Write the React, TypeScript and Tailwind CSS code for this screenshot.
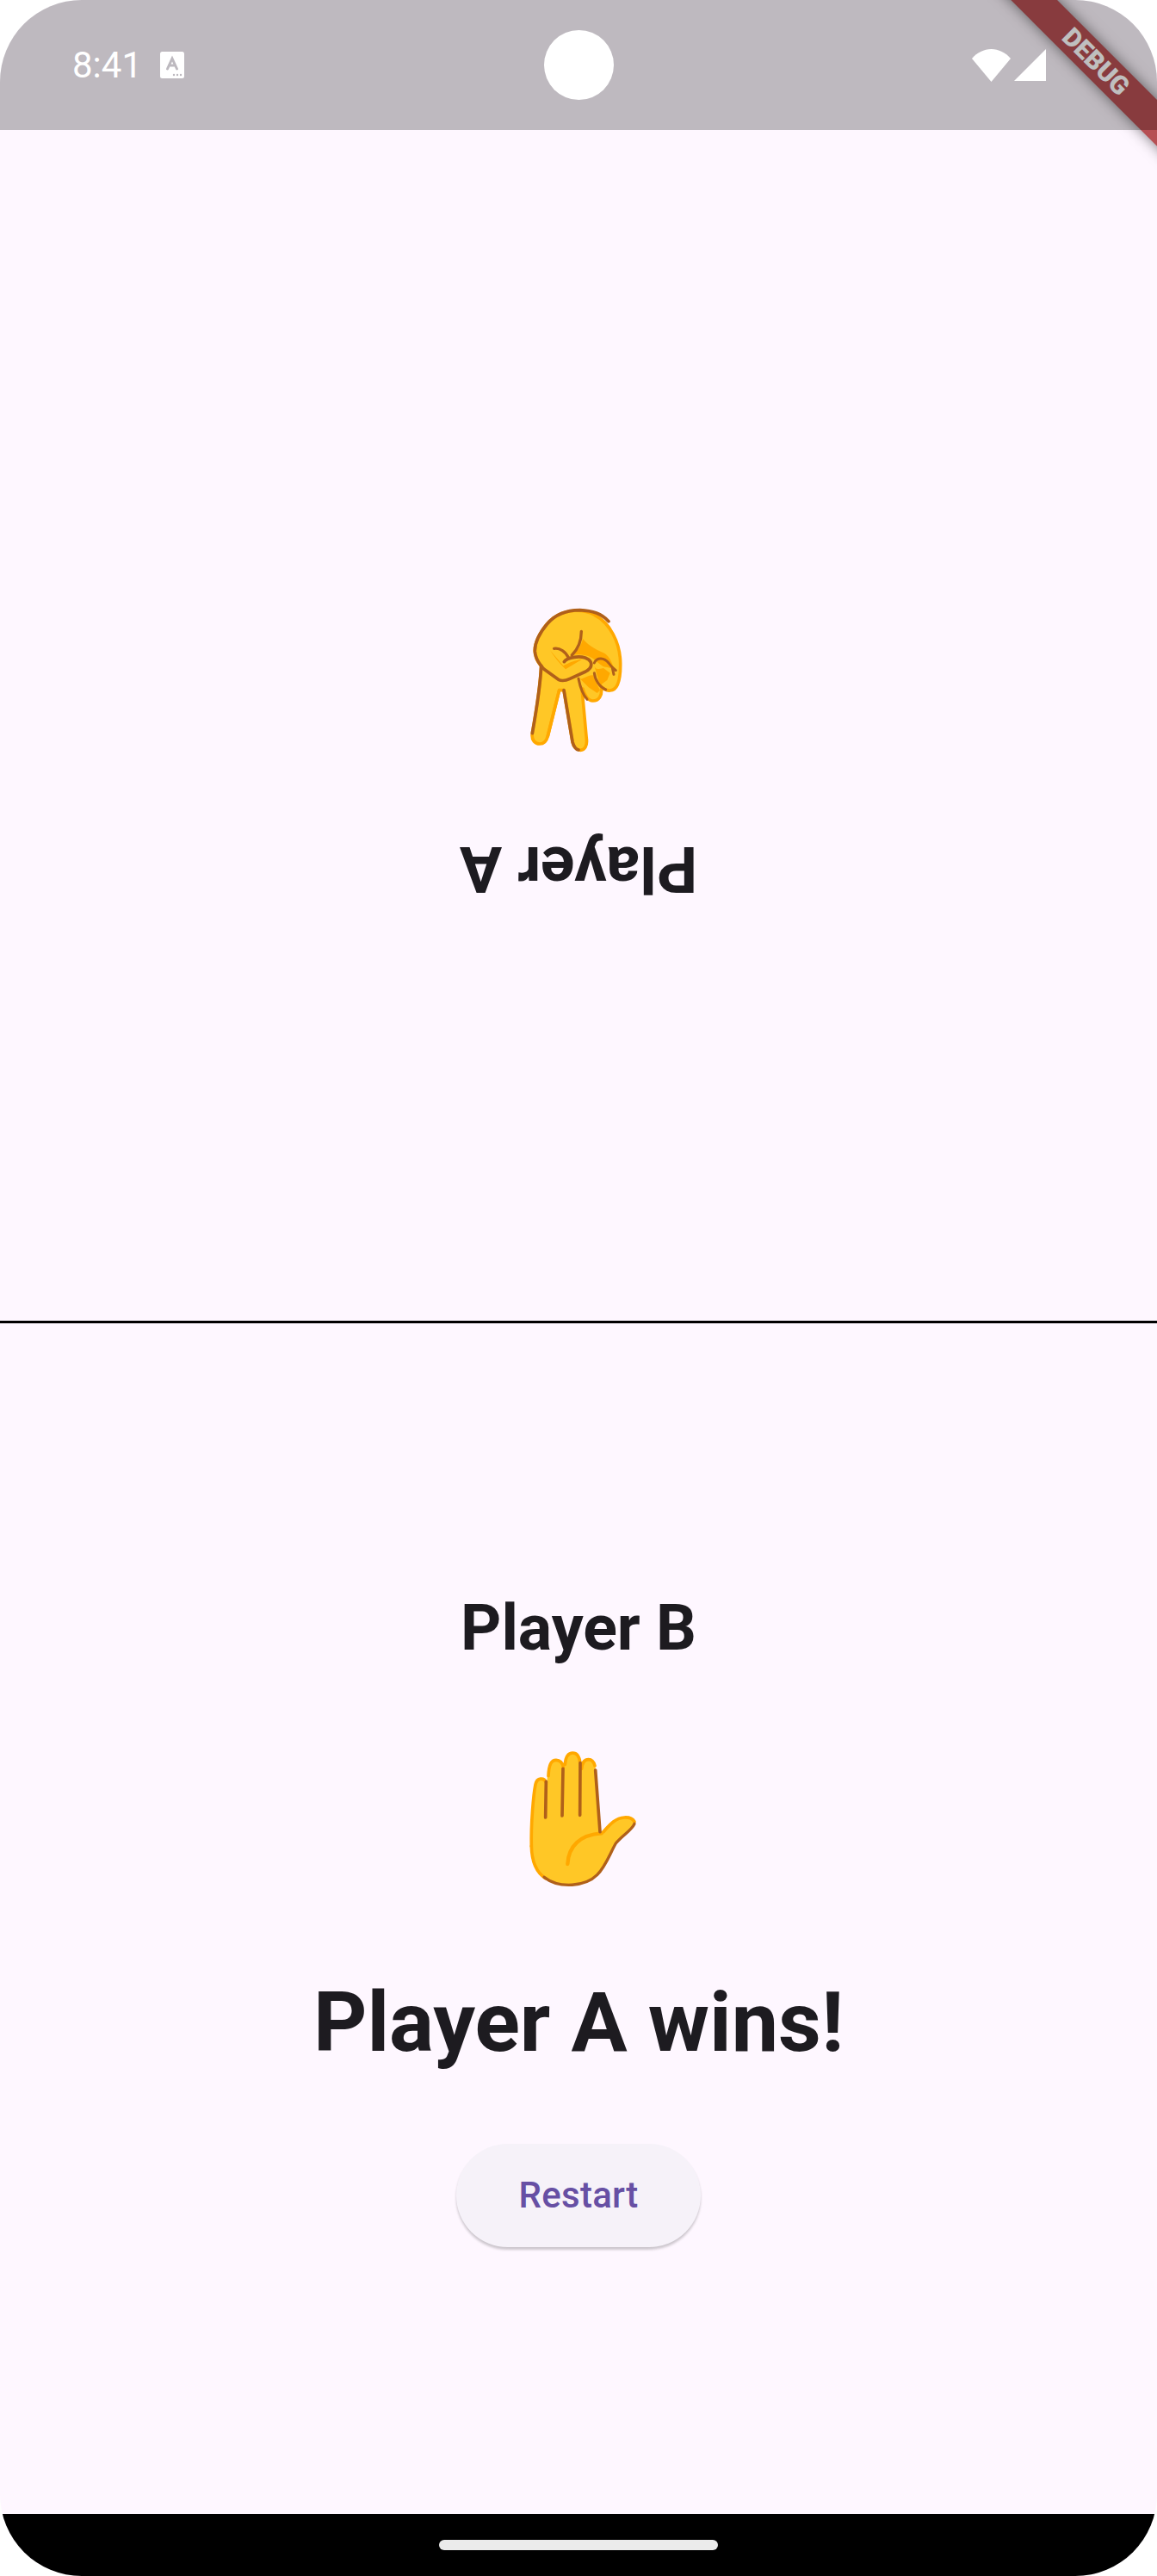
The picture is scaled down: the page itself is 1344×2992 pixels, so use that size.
const roboto = "font-['Roboto',sans-serif]";

function VictoryHand() {
  return (
    <svg viewBox="0 0 570 570" className="w-[190px] h-[190px]" fill="none" strokeLinecap="round" strokeLinejoin="round">
      <g transform="rotate(180 285 285)">
        <path d="M155 250C152 320 132 440 124 485C120 510 135 522 150 522C165 522 174 510 178 495L218 335L234 335L264 515C268 535 280 544 292 544C306 543 316 530 313 505L298 340L300 330C305 350 318 372 335 372C355 372 368 355 365 325L360 318C372 332 385 337 395 336C420 335 432 300 431 240C430 170 395 100 340 72C300 50 240 52 195 85C160 112 130 170 133 200C135 222 145 240 155 250Z" fill="#ffc726" stroke="#ffa800" strokeWidth="11" />
        <path d="M300 155C295 180 280 200 262 213C290 208 320 212 340 228C360 245 370 255 385 255L410 262C400 235 392 215 372 205C340 190 315 175 300 155Z" fill="#ffa800" />
        <path d="M340 250C345 265 352 262 372 258L395 275L385 300L360 318Z" fill="#ffa800" />
        <path d="M290 295C295 300 320 280 335 283L350 315L360 335L350 345L320 325Z" fill="#ffa800" />
        <path d="M186 196L232 250C250 240 270 232 300 226L240 262C225 248 205 225 186 196Z" fill="#ffa800" />
        <path d="M155 250C152 320 132 440 124 485" stroke="#b0601a" strokeWidth="11" />
        <path d="M218 335L178 495" stroke="#ffa800" strokeWidth="11" />
        <path d="M234 335L264 515C268 530 274 540 285 543" stroke="#b0601a" strokeWidth="11" />
        <path d="M390 95C365 68 335 58 290 56C240 56 200 75 175 105C150 135 132 170 133 200C135 232 155 250 165 262L215 298C225 303 240 302 255 295L310 270C325 262 332 250 328 238C322 225 300 215 270 220C255 222 240 228 235 236" stroke="#b0601a" strokeWidth="11" />
        <path d="M200 190C220 187 240 200 250 222M295 130C295 165 285 190 262 213" stroke="#b0601a" strokeWidth="10" />
        <path d="M340 275C342 300 360 325 380 333M340 240C350 218 375 222 390 240C400 255 410 262 415 266M403 258L408 280" stroke="#b0601a" strokeWidth="9" />
        <path d="M285 295C290 320 300 350 315 367" stroke="#b0601a" strokeWidth="9" />
      </g>
    </svg>
  );
}

function RaisedHand() {
  return (
    <svg viewBox="0 0 570 600" className="w-[190px] h-[200px]" fill="none" strokeLinecap="round" strokeLinejoin="round">
      <path d="M121 400C119 320 128 220 135 185C140 160 172 160 175 185C178 130 180 100 207 100C228 100 233 120 235 135C236 95 245 75 265 75C285 75 292 95 294 130C298 105 310 98 320 98C338 98 345 120 347 150L362 352C385 330 410 302 445 300C475 298 488 320 475 335C445 365 420 380 405 405C385 450 370 490 335 515C290 545 220 545 170 512C135 490 122 450 121 400Z" fill="#ffc726" />
      <path d="M121 400C119 320 128 220 135 185C140 160 165 160 172 178M180 155C182 115 190 100 207 100C220 100 230 110 232 125M238 115C240 90 250 75 265 75C280 75 288 88 291 110M296 130C298 108 308 98 320 98C330 98 338 105 342 120" stroke="#ffa800" strokeWidth="11" />
      <path d="M121 400C122 450 135 490 170 512" stroke="#ffa800" strokeWidth="11" />
      <path d="M372 350C390 330 410 302 445 300C462 299 475 306 480 315" stroke="#ffa800" strokeWidth="11" />
      <path d="M247 462C250 400 290 360 365 355" stroke="#ffa800" strokeWidth="13" />
      <path d="M172 175L170 300M231 130L228 294M291 110L290 292M344 135L360 350" stroke="#b0601a" strokeWidth="11" />
      <path d="M480 322C470 345 440 360 415 390C395 425 380 470 350 500C310 540 220 550 165 508" stroke="#b0601a" strokeWidth="10" />
    </svg>
  );
}

export default function App() {
  return (
    <div className="w-[1344px] h-[2992px] bg-white">
      <div className={`relative w-full h-full overflow-hidden rounded-[95px] bg-[#fef7ff] flex flex-col ${roboto}`}>
        {/* debug banner sits under the status-bar scrim */}
        <div className="absolute top-0 right-0 w-0 h-0 rotate-45">
          <div className="absolute left-[-262px] top-[82px] w-[525px] h-[38px] bg-[#b64f53] shadow-[0_0_16px_rgba(0,0,0,0.5)] flex items-center justify-center text-[30px] leading-none font-black text-white">
            DEBUG
          </div>
        </div>

        <div className="relative h-[151px] shrink-0 bg-black/25 flex items-center justify-between pl-[84px] pr-[129px]">
          <div className="flex items-center gap-[21px]">
            <span className="text-[42px] leading-none font-normal text-white">8:41</span>
            <svg viewBox="0 0 28 31" className="w-[28px] h-[31px]">
              <rect width="28" height="31" rx="2.5" fill="#fff" />
              <path d="M8.5 20L14 8L19.5 20M10.5 16H17.5" stroke="#bdb9bf" strokeWidth="3" fill="none" strokeLinecap="round" />
              <circle cx="16" cy="27" r="1.2" fill="#bdb9bf" />
              <circle cx="20" cy="27" r="1.2" fill="#bdb9bf" />
              <circle cx="24" cy="27" r="1.2" fill="#bdb9bf" />
            </svg>
          </div>
          <div className="absolute left-[631.5px] top-[35px] w-[81px] h-[81px] rounded-full bg-white" />
          <div className="flex items-center gap-[4px]">
            <svg viewBox="0 0 45 38" className="w-[45px] h-[38px]">
              <path d="M0 11C6 4 14 0 22.5 0C31 0 39 4 45 11L22.5 38Z" fill="#fff" />
            </svg>
            <svg viewBox="0 0 37 37" className="w-[37px] h-[37px]">
              <path d="M37 0V37H0Z" fill="#fff" />
            </svg>
          </div>
        </div>

        <div className="flex-1 flex flex-col items-center justify-center rotate-180">
          <div className="text-[73.5px] leading-[86px] font-bold text-[#1d1b20]">Player A</div>
          <div className="mt-[86px] mb-[57px]"><VictoryHand /></div>
        </div>

        <div className="h-[3px] shrink-0 bg-black" />

        <div className="flex-1 flex flex-col items-center justify-center">
          <div className="text-[73.5px] leading-[86px] font-bold text-[#1d1b20]">Player B</div>
          <div className="mt-[77px]"><RaisedHand /></div>
          <div className="mt-[81px] text-[97px] leading-[114px] font-bold text-[#1d1b20]">Player A wins!</div>
          <button className="mt-[84px] w-[284px] h-[120px] rounded-full bg-[#f6f2f9] shadow-[0_3px_3px_rgba(0,0,0,0.2)] text-[42px] font-medium tracking-[0.26px] text-[#6750a4]">
            Restart
          </button>
        </div>

        <div className="relative h-[72px] shrink-0 bg-black flex justify-center pt-[30px]">
          <div className="w-[324px] h-[12px] rounded-full bg-[#ebebeb]" />
        </div>
      </div>
    </div>
  );
}
